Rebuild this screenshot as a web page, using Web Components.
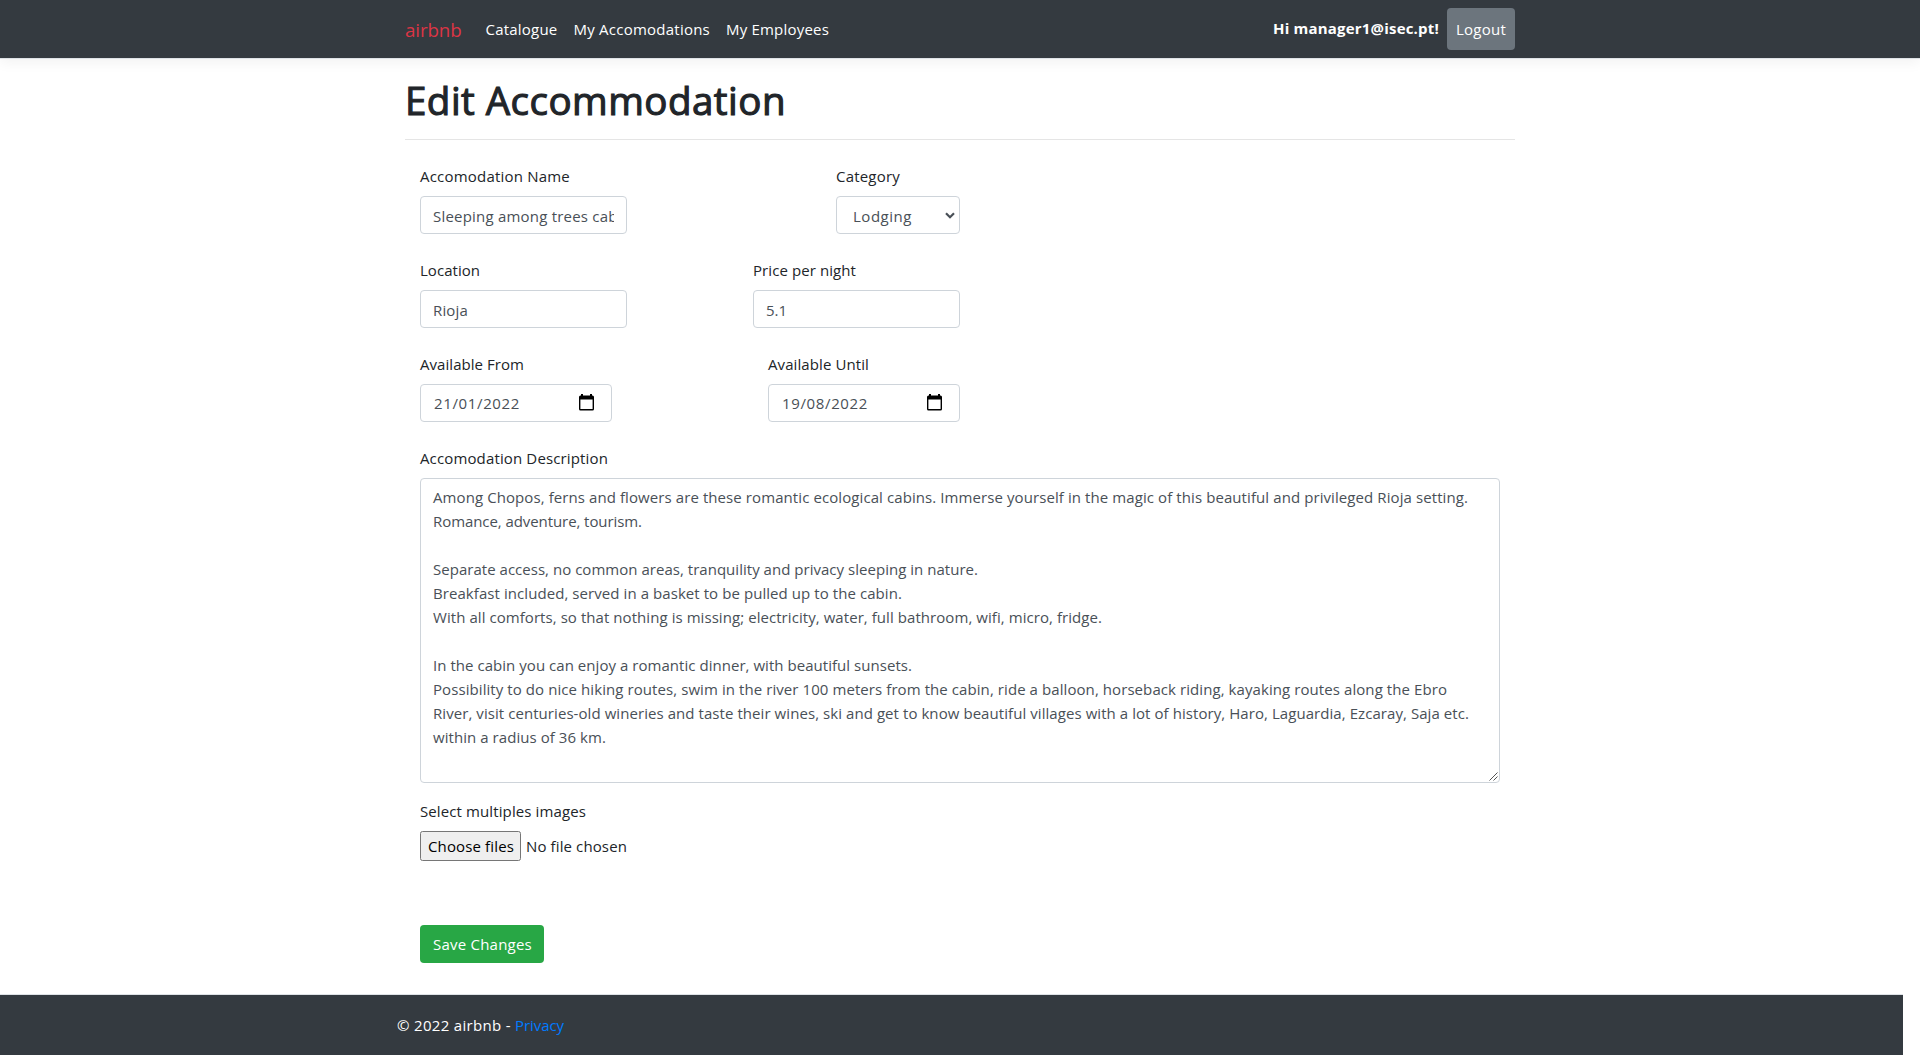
<!DOCTYPE html>
<html lang="en">
<head>
<meta charset="utf-8">
<title>Edit Accommodation - airbnb</title>
<style>
html,body{margin:0;background:#fff}
body{height:1055px;overflow:hidden;font:15px/24px "Open Sans","Noto Sans",sans-serif;color:#212529}
</style>
</head>
<body>
<edit-page></edit-page>
<script>
const define = (name, html, after) => customElements.define(name, class extends HTMLElement {
  connectedCallback() {
    if (this.shadowRoot) return;
    const root = this.attachShadow({ mode: 'open' });
    const t = document.createElement('template');
    t.innerHTML = html;
    root.append(t.content.cloneNode(true));
    if (after) after(this, root);
  }
});

// Single line of text tracked to a fixed advance width (attribute w).
define('fit-text', `<style>:host{display:block;flex:none;white-space:pre}span{display:inline-block}</style><span><slot></slot></span>`, (el, root) => {
  const w = +el.getAttribute('w');
  const s = root.querySelector('span');
  const n = [...el.textContent].length;
  s.style.letterSpacing = ((w - s.getBoundingClientRect().width) / n).toFixed(4) + 'px';
  el.style.width = w + 'px';
});

define('site-header', `<style>
:host{display:block;height:58px;background:#343a40;border-bottom:1px solid #dee2e6;box-shadow:0 4px 12px rgba(0,0,0,.05);color:#fff}
nav{box-sizing:border-box;width:1110px;height:58px;margin:0 auto;display:flex;align-items:flex-start;padding-top:17px}
.brand{color:#dc3545;font-size:18.8px;margin:1px 24px 0 0}
.link{margin-right:16px}
.hi{font-weight:700;margin:-1px 8px 0 auto}
button{all:unset;box-sizing:border-box;width:68px;height:42px;margin-top:-9px;background:#6c757d;border-radius:4px;padding-left:9px}
</style><nav>
<fit-text class="brand" w="56.5">airbnb</fit-text>
<fit-text class="link" w="72">Catalogue</fit-text>
<fit-text class="link" w="136.5">My Accomodations</fit-text>
<fit-text class="link" w="103">My Employees</fit-text>
<fit-text class="hi" w="166">Hi manager1@isec.pt!</fit-text>
<button><fit-text w="50">Logout</fit-text></button></nav>`);

define('form-field', `<style>
:host{display:block;flex:none;height:94px}
.box{box-sizing:border-box;height:38px;margin-top:8px;border:1px solid #ced4da;border-radius:4px;background:#fff;color:#495057;padding:7px 12px 0;display:flex;justify-content:space-between}
.clip{overflow:hidden;height:26px;flex:1;min-width:0}
:host([kind=date]) .box{padding:6px 12px 0 13px}
:host([kind=select]) .box{padding:7px 4px 0 16px}
svg{display:none;flex:none}
:host([kind=date]) .cal,:host([kind=select]) .arrow{display:block}
.cal{margin:3px 5px 0 0}
.arrow{margin:8px 0 0}
</style><slot name="label"></slot><div class="box"><div class="clip"><slot></slot></div>
<svg class="cal" width="15" height="17" viewBox="0 0 15 17"><path fill="#000" fill-rule="evenodd" d="M2 0h2v1.5h7V0h2v1.5h.5A1.5 1.5 0 0 1 15 3v12a1.5 1.5 0 0 1-1.5 1.5h-12A1.5 1.5 0 0 1 0 15V3a1.5 1.5 0 0 1 1.5-1.5H2zM1.4 5.6v9.5h12.2V5.6z"/></svg>
<svg class="arrow" width="10" height="7" viewBox="0 0 10 7"><path d="M1 1.2l4 4 4-4" fill="none" stroke="#495057" stroke-width="2.2"/></svg></div>`, (el, root) => {
  root.querySelector('.box').style.width = el.getAttribute('width') + 'px';
});

define('text-area', `<style>
:host{box-sizing:border-box;display:flex;flex-direction:column;width:1080px;height:305px;margin-top:8px;border:1px solid #ced4da;border-radius:4px;padding:6px 0 0 12px;color:#495057}
svg{display:block;margin:auto 1px 1px auto}
::slotted(p){height:24px;margin:0;flex:none}
</style><slot></slot><svg width="9" height="9" viewBox="0 0 9 9"><path d="M.5 8.5l8-8M4.5 8.5l4-4" stroke="#555" stroke-width="1" fill="none"/></svg>`);

define('file-picker', `<style>
:host{display:flex;height:30px}
button{all:unset;box-sizing:border-box;width:101px;height:30px;border:1px solid #767676;border-radius:2.5px;background:#efefef;color:#000;padding-left:7px;margin-right:5px}
.status{margin-top:3px}
</style><button><fit-text w="86">Choose files</fit-text></button><fit-text class="status" w="101">No file chosen</fit-text>`);

define('save-button', `<style>
:host{display:block}
button{all:unset;box-sizing:border-box;display:block;width:124px;height:38px;border-radius:4px;background:#28a745;color:#fff;padding-left:13px}
</style><button><slot></slot></button>`);

define('site-footer', `<style>
:host{box-sizing:border-box;display:flex;width:1903px;height:61px;flex:none;border-top:1px solid #dee2e6;background:#343a40;color:#fff;padding:18px 0 0 397px}
a{color:#007bff;text-decoration:none}
</style><fit-text w="118">© 2022 airbnb - </fit-text><a><fit-text w="49">Privacy</fit-text></a>`);

define('edit-page', `<style>
:host{display:flex;flex-direction:column;height:1055px}
site-header{flex:none}
main{width:1110px;margin:0 auto;flex:1;min-height:0;display:flex;flex-direction:column}
h1{font-size:38.5px;line-height:48px;font-weight:500;-webkit-text-stroke:1.1px #212529;margin:17px 0 0}
hr{width:100%;height:1px;border:0;background:#e5e5e5;margin:15px 0 24px}
form{padding:0 15px}
.row{display:flex;justify-content:space-between;width:540px}
file-picker{margin-top:8px}
.images{margin-top:16px}
save-button{margin-top:64px}
</style>
<site-header></site-header>
<main>
<h1><fit-text w="381">Edit Accommodation</fit-text></h1>
<hr>
<form>
<div class="row">
<form-field width="207"><fit-text slot="label" w="150">Accomodation Name</fit-text><fit-text w="198">Sleeping among trees cabin</fit-text></form-field>
<form-field width="124" kind="select"><fit-text slot="label" w="64">Category</fit-text><fit-text w="59">Lodging</fit-text></form-field>
</div>
<div class="row">
<form-field width="207"><fit-text slot="label" w="60">Location</fit-text><fit-text w="35">Rioja</fit-text></form-field>
<form-field width="207"><fit-text slot="label" w="103">Price per night</fit-text><fit-text w="21">5.1</fit-text></form-field>
</div>
<div class="row">
<form-field width="192" kind="date"><fit-text slot="label" w="104">Available From</fit-text><fit-text w="86">21/01/2022</fit-text></form-field>
<form-field width="192" kind="date"><fit-text slot="label" w="101">Available Until</fit-text><fit-text w="86">19/08/2022</fit-text></form-field>
</div>
<fit-text w="188">Accomodation Description</fit-text>
<text-area>
<p><fit-text w="1035">Among Chopos, ferns and flowers are these romantic ecological cabins. Immerse yourself in the magic of this beautiful and privileged Rioja setting.</fit-text></p>
<p><fit-text w="209">Romance, adventure, tourism.</fit-text></p>
<p></p>
<p><fit-text w="545">Separate access, no common areas, tranquility and privacy sleeping in nature.</fit-text></p>
<p><fit-text w="469">Breakfast included, served in a basket to be pulled up to the cabin.</fit-text></p>
<p><fit-text w="669">With all comforts, so that nothing is missing; electricity, water, full bathroom, wifi, micro, fridge.</fit-text></p>
<p></p>
<p><fit-text w="479">In the cabin you can enjoy a romantic dinner, with beautiful sunsets.</fit-text></p>
<p><fit-text w="1014">Possibility to do nice hiking routes, swim in the river 100 meters from the cabin, ride a balloon, horseback riding, kayaking routes along the Ebro</fit-text></p>
<p><fit-text w="1036">River, visit centuries-old wineries and taste their wines, ski and get to know beautiful villages with a lot of history, Haro, Laguardia, Ezcaray, Saja etc.</fit-text></p>
<p><fit-text w="173">within a radius of 36 km.</fit-text></p>
</text-area>
<div class="images"><fit-text w="166">Select multiples images</fit-text></div>
<file-picker></file-picker>
<save-button><fit-text w="99">Save Changes</fit-text></save-button>
</form>
</main>
<site-footer></site-footer>`);
</script>
</body>
</html>
